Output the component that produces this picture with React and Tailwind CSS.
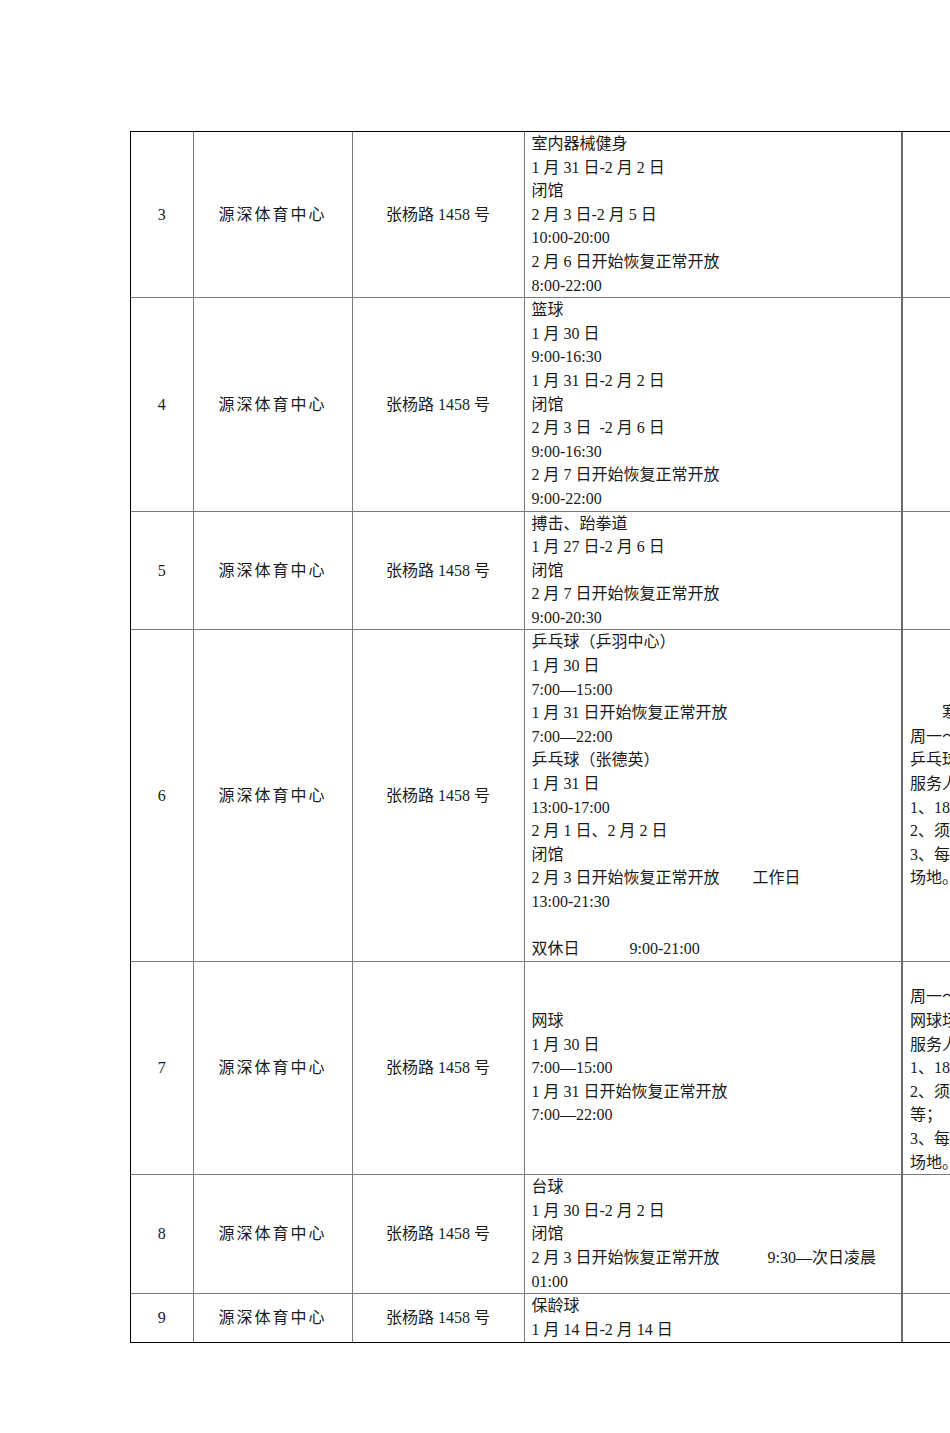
const ROWS = [
  {
    no: "3",
    main: [
      "室内器械健身",
      "1 月 31 日-2 月 2 日",
      "闭馆",
      "2 月 3 日-2 月 5 日",
      "10:00-20:00",
      "2 月 6 日开始恢复正常开放",
      "8:00-22:00",
    ],
    note: [],
  },
  {
    no: "4",
    main: [
      "篮球",
      "1 月 30 日",
      "9:00-16:30",
      "1 月 31 日-2 月 2 日",
      "闭馆",
      "2 月 3 日  -2 月 6 日",
      "9:00-16:30",
      "2 月 7 日开始恢复正常开放",
      "9:00-22:00",
    ],
    note: [],
  },
  {
    no: "5",
    main: ["搏击、跆拳道", "1 月 27 日-2 月 6 日", "闭馆", "2 月 7 日开始恢复正常开放", "9:00-20:30"],
    note: [],
  },
  {
    no: "6",
    main: [
      "乒乓球（乒羽中心）",
      "1 月 30 日",
      "7:00—15:00",
      "1 月 31 日开始恢复正常开放",
      "7:00—22:00",
      "乒乓球（张德英）",
      "1 月 31 日",
      "13:00-17:00",
      "2 月 1 日、2 月 2 日",
      "闭馆",
      ["2 月 3 日开始恢复正常开放", "工作日", "ml-[33px]"],
      "13:00-21:30",
      "",
      ["双休日", "9:00-21:00", "ml-[50px]"],
    ],
    note: [
      "　　寒假期间优惠时段：",
      "周一～周五 9:00-17:00",
      "乒乓球场地半价优惠",
      "服务人群：",
      "1、18 周岁以下青少年；",
      "2、须出示学生证；",
      "3、每人每次限预订一片",
      "场地。",
    ],
  },
  {
    no: "7",
    main: ["网球", "1 月 30 日", "7:00—15:00", "1 月 31 日开始恢复正常开放", "7:00—22:00"],
    mainCenter: true,
    note: [
      "",
      "周一～周五 9:00-17:00",
      "网球场地半价优惠",
      "服务人群：",
      "1、18 周岁以下青少年；",
      "2、须出示学生证、身份证",
      "等；",
      "3、每人每次限预订一片",
      "场地。",
    ],
  },
  {
    no: "8",
    main: [
      "台球",
      "1 月 30 日-2 月 2 日",
      "闭馆",
      ["2 月 3 日开始恢复正常开放", "9:30—次日凌晨", "ml-[48px]"],
      "01:00",
    ],
    note: [],
  },
  {
    no: "9",
    main: ["保龄球", "1 月 14 日-2 月 14 日"],
    note: [],
    tall: true,
  },
];

function Line({ item }) {
  if (Array.isArray(item)) {
    return (
      <div className="whitespace-pre">
        {item[0]}
        <span className={item[2]}>{item[1]}</span>
      </div>
    );
  }
  return <div className="whitespace-pre">{item === "" ? "\u00a0" : item}</div>;
}

export default function App() {
  return (
    <div
      className="w-[950px] min-h-[1433px] overflow-hidden bg-white text-[#1a1a1a] text-[16px] leading-[23.6px]"
      style={{ fontFamily: '"Liberation Serif", "Noto Sans CJK SC", serif' }}
    >
      <div className="pl-[130px] pt-[131px]">
        <div className="w-[1000px] border-l border-t border-b border-black">
          <table className="border-collapse table-fixed">
            <colgroup>
              <col className="w-[62px]" />
              <col className="w-[159px]" />
              <col className="w-[172px]" />
              <col className="w-[378px]" />
              <col className="w-[227px]" />
            </colgroup>
            <tbody>
              {ROWS.map((row, i) => {
                const last = i === ROWS.length - 1;
                const bb = last ? "" : "border-b border-b-[#7a7a7a]";
                return (
                  <tr key={row.no} className={row.tall ? "h-[48px]" : ""}>
                    <td className={`${bb} border-r border-r-[#7a7a7a] text-center align-middle`}>{row.no}</td>
                    <td className={`${bb} border-r border-r-[#7a7a7a] text-center align-middle tracking-[2px]`}>
                      源深体育中心
                    </td>
                    <td className={`${bb} border-r border-r-[#7a7a7a] text-center align-middle`}>张杨路 1458 号</td>
                    <td
                      className={`${bb} border-r-2 border-r-[#6a6a6a] pl-[7px] pr-[6px] ${
                        row.mainCenter ? "align-middle" : "align-top"
                      }`}
                    >
                      {row.main.map((m, k) => (
                        <Line key={k} item={m} />
                      ))}
                    </td>
                    <td className={`${bb} pl-[7px] align-middle`}>
                      {row.note.map((m, k) => (
                        <Line key={k} item={m} />
                      ))}
                    </td>
                  </tr>
                );
              })}
            </tbody>
          </table>
        </div>
      </div>
    </div>
  );
}
